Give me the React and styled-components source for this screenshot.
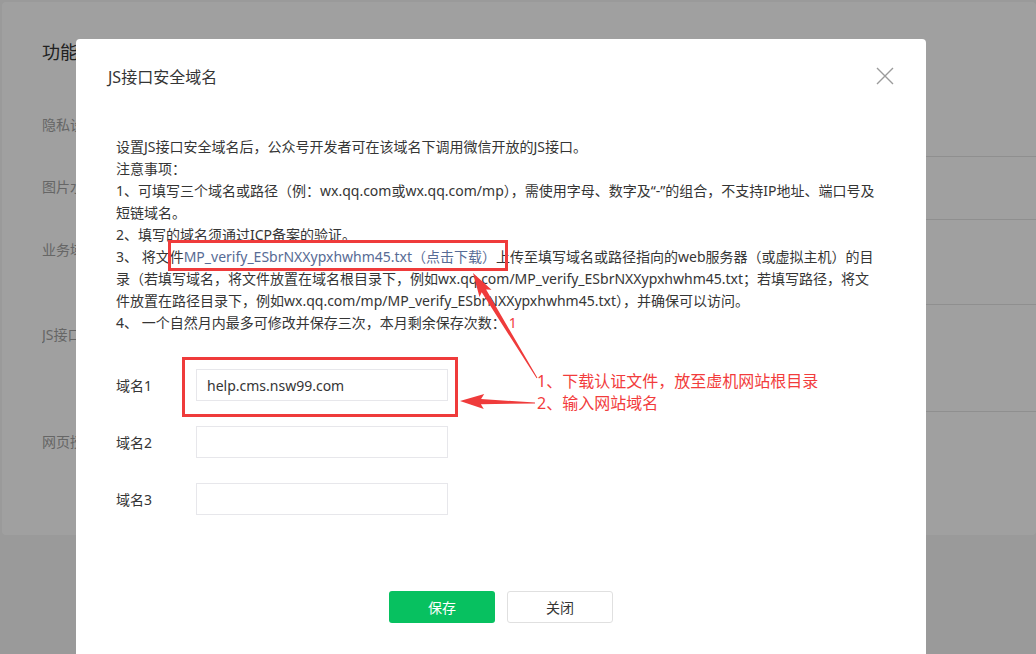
import React from "react";
import styled, { createGlobalStyle } from "styled-components";

const GlobalStyle = createGlobalStyle`
  html, body { margin: 0; padding: 0; }
  body {
    font-family: "Noto Sans", "Noto Sans CJK SC", sans-serif;
    color: #353535;
    background: #f5f6f5;
  }
  * { box-sizing: border-box; }
`;

const Page = styled.div`
  width: 1036px;
  height: 654px;
  overflow: hidden;
  padding: 2px 0 0 2px;
`;

const Card = styled.section`
  background: #fff;
  border-radius: 4px;
  height: 533px;
  padding: 38px 0 0 40px;
`;

const CardTitle = styled.h2`
  margin: 0 0 30px;
  font-size: 18px;
  line-height: 24px;
  font-weight: 400;
  color: #353535;
`;

const SettingRow = styled.div`
  display: flex;
  height: ${(p) => p.$h}px;
`;

const SettingLabel = styled.div`
  width: 170px;
  padding-top: 21px;
  font-size: 14px;
  line-height: 20px;
  color: #a3a3a3;
  white-space: nowrap;
  overflow: hidden;
`;

const SettingBody = styled.div`
  flex: 1;
  border-top: ${(p) => (p.$line ? "1px solid #e4e4e4" : "none")};
`;

const Overlay = styled.div`
  position: fixed;
  inset: 0;
  background: rgba(0, 0, 0, 0.373);
`;

const Modal = styled.div`
  position: fixed;
  left: 76px;
  top: 39px;
  width: 850px;
  height: 640px;
  background: #fff;
  border-radius: 4px;
`;

const Header = styled.div`
  display: flex;
  align-items: center;
  justify-content: space-between;
  height: 74px;
  padding: 0 32px;
`;

const Title = styled.h3`
  margin: 0;
  font-size: 16px;
  font-weight: 400;
  color: #353535;
`;

const CloseButton = styled.button`
  display: flex;
  padding: 0;
  border: none;
  background: none;
  width: 18px;
  height: 18px;
  cursor: pointer;
`;

const Body = styled.div`
  padding: 23px 40px 0;
`;

const Notice = styled.div`
  font-size: 14px;
  line-height: 22px;
  color: #353535;
  white-space: nowrap;
`;

const Line = styled.div``;

const LinkWrap = styled.span`
  position: relative;
  display: inline-block;
  line-height: 22px;
`;

const DownloadLink = styled.a`
  color: #576b95;
  text-decoration: none;
`;

const Marker = styled.span`
  position: absolute;
  top: ${(p) => p.$t}px;
  left: ${(p) => p.$l}px;
  right: ${(p) => p.$r}px;
  bottom: ${(p) => p.$b}px;
  border: 3px solid #ef3b3b;
  pointer-events: none;
`;

const Count = styled.span`
  color: #f23c3c;
  margin-left: 3px;
`;

const Form = styled.div`
  margin-top: 35px;
  display: flex;
  flex-direction: column;
  gap: 25px;
`;

const FormRow = styled.div`
  display: flex;
  align-items: center;
`;

const FormLabel = styled.label`
  width: 80px;
  font-size: 14px;
  color: #353535;
`;

const InputWrap = styled.div`
  position: relative;
`;

const Input = styled.input`
  display: block;
  width: 252px;
  height: 32px;
  border: 1px solid #e7e7eb;
  padding: 0 10px;
  font-family: inherit;
  font-size: 14px;
  color: #353535;
  outline: none;
`;

const Footer = styled.div`
  margin-top: 76px;
  display: flex;
  justify-content: center;
  gap: 12px;
`;

const Button = styled.button`
  width: 106px;
  height: 32px;
  border-radius: 3px;
  font-family: inherit;
  font-size: 14px;
  cursor: pointer;
  border: ${(p) => (p.$primary ? "none" : "1px solid #e0e0e0")};
  background: ${(p) => (p.$primary ? "#07c160" : "#fff")};
  color: ${(p) => (p.$primary ? "#fff" : "#353535")};
`;

const ArrowLayer = styled.svg`
  position: fixed;
  left: 0;
  top: 0;
  pointer-events: none;
`;

const AnnotationNote = styled.div`
  position: fixed;
  left: 537px;
  top: 370px;
  font-size: 16px;
  line-height: 22px;
  color: #f23c3c;
  white-space: nowrap;
`;

function arrowPoints(tip, tail, headLen, headHalf, baseHalf, tailHalf) {
  const dx = tip[0] - tail[0];
  const dy = tip[1] - tail[1];
  const len = Math.hypot(dx, dy);
  const ux = dx / len;
  const uy = dy / len;
  const nx = -uy;
  const ny = ux;
  const bx = tip[0] - ux * headLen;
  const by = tip[1] - uy * headLen;
  const pts = [
    [tip[0], tip[1]],
    [bx + nx * headHalf, by + ny * headHalf],
    [bx + ux * 3 + nx * baseHalf, by + uy * 3 + ny * baseHalf],
    [tail[0] + nx * tailHalf, tail[1] + ny * tailHalf],
    [tail[0] - nx * tailHalf, tail[1] - ny * tailHalf],
    [bx + ux * 3 - nx * baseHalf, by + uy * 3 - ny * baseHalf],
    [bx - nx * headHalf, by - ny * headHalf],
  ];
  return pts.map((p) => p.map((v) => v.toFixed(1)).join(",")).join(" ");
}

const settings = [
  { label: "隐私设置", h: 62, line: false },
  { label: "图片水印", h: 63, line: true },
  { label: "业务域名", h: 85, line: true },
  { label: "JS接口安全域名", h: 107, line: true },
  { label: "网页授权域名", h: 124, line: true },
];

export default function App() {
  return (
    <>
      <GlobalStyle />
      <Page>
        <Card>
          <CardTitle>功能设置</CardTitle>
          {settings.map((s) => (
            <SettingRow key={s.label} $h={s.h}>
              <SettingLabel>{s.label}</SettingLabel>
              <SettingBody $line={s.line} />
            </SettingRow>
          ))}
        </Card>
      </Page>
      <Overlay />
      <Modal>
        <Header>
          <Title>JS接口安全域名</Title>
          <CloseButton aria-label="关闭">
            <svg width="18" height="18" viewBox="0 0 18 18">
              <path d="M1 1L17 17M17 1L1 17" stroke="#9b9b9b" strokeWidth="1.4" fill="none" />
            </svg>
          </CloseButton>
        </Header>
        <Body>
          <Notice>
            <Line>设置JS接口安全域名后，公众号开发者可在该域名下调用微信开放的JS接口。</Line>
            <Line>注意事项：</Line>
            <Line>1、可填写三个域名或路径（例：wx.qq.com或wx.qq.com/mp），需使用字母、数字及“-”的组合，不支持IP地址、端口号及</Line>
            <Line>短链域名。</Line>
            <Line>2、填写的域名须通过ICP备案的验证。</Line>
            <Line>
              3、 将文件
              <LinkWrap>
                <DownloadLink href="#">MP_verify_ESbrNXXypxhwhm45.txt（点击下载）</DownloadLink>
                <Marker $t={-6} $l={-16} $r={-12} $b={-3} />
              </LinkWrap>
              上传至填写域名或路径指向的web服务器（或虚拟主机）的目
            </Line>
            <Line>录（若填写域名，将文件放置在域名根目录下，例如wx.qq.com/MP_verify_ESbrNXXypxhwhm45.txt；若填写路径，将文</Line>
            <Line>件放置在路径目录下，例如wx.qq.com/mp/MP_verify_ESbrNXXypxhwhm45.txt），并确保可以访问。</Line>
            <Line>
              4、 一个自然月内最多可修改并保存三次，本月剩余保存次数：<Count>1</Count>
            </Line>
          </Notice>
          <Form>
            <FormRow>
              <FormLabel>域名1</FormLabel>
              <InputWrap>
                <Input defaultValue="help.cms.nsw99.com" />
                <Marker $t={-12} $l={-14} $r={-10} $b={-16} />
              </InputWrap>
            </FormRow>
            <FormRow>
              <FormLabel>域名2</FormLabel>
              <InputWrap>
                <Input />
              </InputWrap>
            </FormRow>
            <FormRow>
              <FormLabel>域名3</FormLabel>
              <InputWrap>
                <Input />
              </InputWrap>
            </FormRow>
          </Form>
          <Footer>
            <Button $primary>保存</Button>
            <Button>关闭</Button>
          </Footer>
        </Body>
      </Modal>
      <ArrowLayer width="1036" height="654" viewBox="0 0 1036 654">
        <polygon points={arrowPoints([473, 273], [537, 378], 24, 7, 2.6, 0.5)} fill="#ef3b3b" />
        <polygon points={arrowPoints([460, 401], [535, 403], 24, 7.5, 2.6, 0.5)} fill="#ef3b3b" />
      </ArrowLayer>
      <AnnotationNote>
        <div>1、下载认证文件，放至虚机网站根目录</div>
        <div>2、输入网站域名</div>
      </AnnotationNote>
    </>
  );
}
